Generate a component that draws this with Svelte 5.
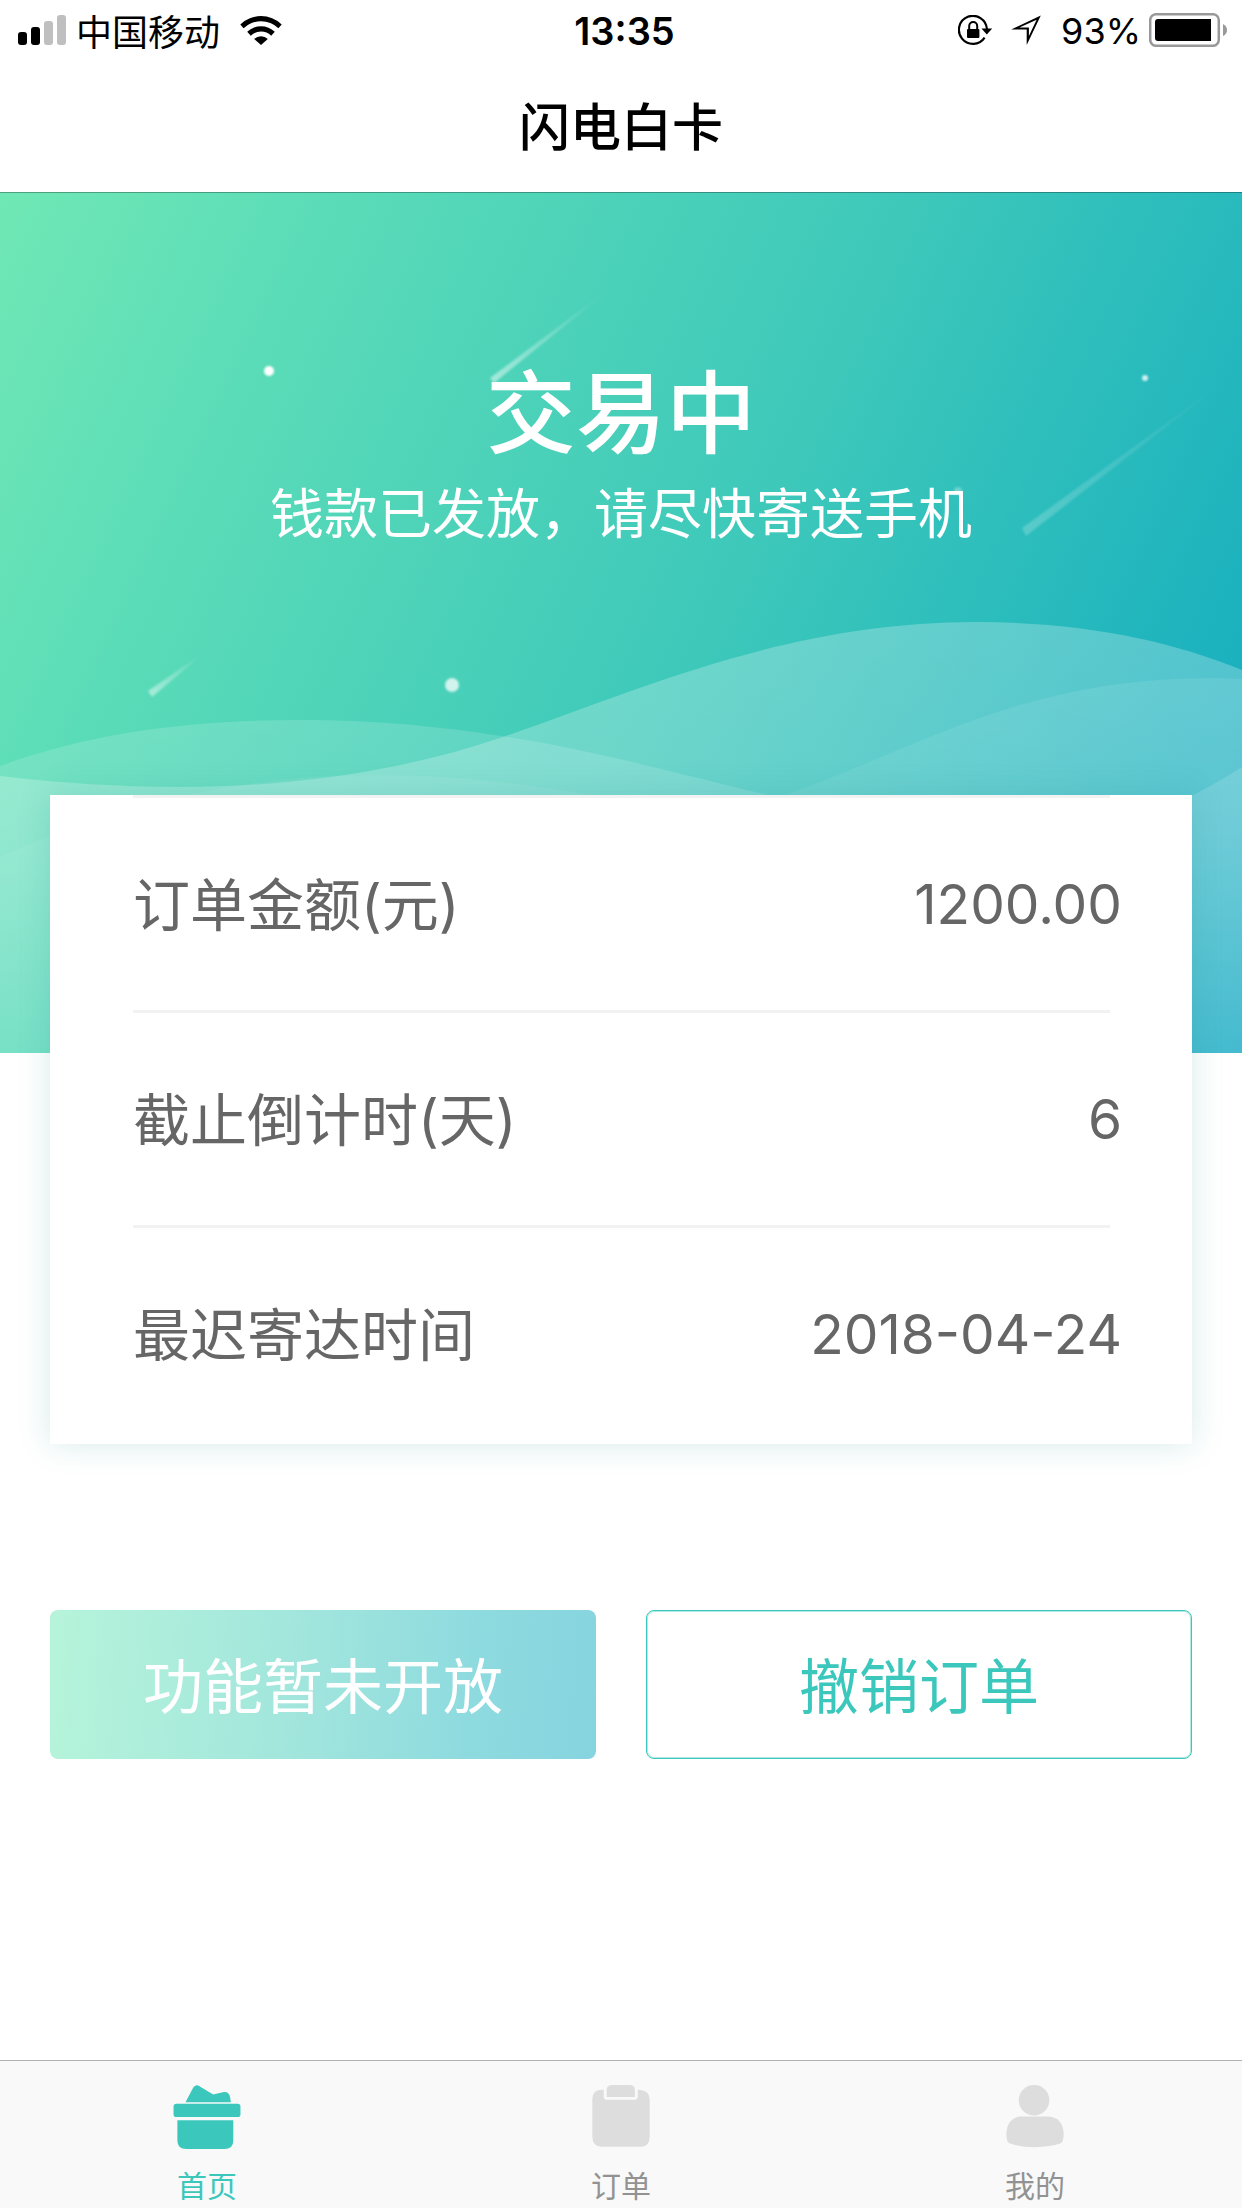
<script>
  const order = [
    { label: "订单金额(元)", value: "1200.00" },
    { label: "截止倒计时(天)", value: "6" },
    { label: "最迟寄达时间", value: "2018-04-24" },
  ];

  const tabs = [
    { id: "home", label: "首页" },
    { id: "orders", label: "订单" },
    { id: "mine", label: "我的" },
  ];

  let active = "home";
</script>

<div class="page">
  <div class="status-bar">
    <div class="status-left">
      <svg width="48" height="30" viewBox="0 0 48 30" aria-hidden="true">
        <rect x="0" y="17" width="9" height="13" rx="3" />
        <rect x="13" y="12" width="9" height="18" rx="3" />
        <rect x="26" y="6" width="9" height="24" rx="3" fill="#bfbfbf" />
        <rect x="39" y="0" width="9" height="30" rx="3" fill="#bfbfbf" />
      </svg>
      <span class="carrier">中国移动</span>
      <svg width="42" height="30" viewBox="0 0 42 30" aria-hidden="true">
        <path d="M0.3 9.4A30 30 0 0 1 41.7 9.4L38.4 13.2A25 25 0 0 0 3.6 13.2Z" />
        <path d="M7.2 16.8A20 20 0 0 1 34.8 16.8L31.2 20.7A14.6 14.6 0 0 0 10.8 20.7Z" />
        <path d="M14.2 23.9A10 10 0 0 1 27.8 23.9L21 30Z" />
      </svg>
    </div>
    <span class="time">13:35</span>
    <div class="status-right">
      <svg width="35" height="30" viewBox="0 0 35 30" aria-hidden="true">
        <path d="M26.6 22.6A14 14 0 1 1 28.9 14" fill="none" stroke="#000" stroke-width="2.2" />
        <path d="M23.5 13.5H34.2L28.8 19.5Z" />
        <rect x="9" y="14" width="12.4" height="9" rx="1" />
        <path d="M11.2 14.5V11a4 4 0 0 1 8 0v3.5" fill="none" stroke="#000" stroke-width="2" />
      </svg>
      <svg class="location" width="30" height="30" viewBox="0 0 30 30" aria-hidden="true">
        <path fill-rule="evenodd" d="M29.8 0.6 15.7 30V14.5H0.2ZM25.6 4.8 8.5 12.4H17.9V21Z" />
      </svg>
      <span class="percent">93%</span>
      <svg width="78" height="34" viewBox="0 0 78 34" aria-hidden="true">
        <rect x="1.2" y="1.2" width="68.6" height="31.6" rx="6" fill="none" stroke="#999" stroke-width="2.5" />
        <path d="M9 6H62V28H9A3 3 0 0 1 6 25V9A3 3 0 0 1 9 6Z" />
        <path d="M74 11Q78 13 78 17T74 23Z" fill="#999" />
      </svg>
    </div>
  </div>

  <header>
    <h1>闪电白卡</h1>
  </header>

  <main>
    <section class="hero">
      <svg class="scene" viewBox="0 192 1242 861" preserveAspectRatio="none" aria-hidden="true">
        <defs>
          <linearGradient id="wave" x1="0" y1="620" x2="0" y2="1053" gradientUnits="userSpaceOnUse">
            <stop offset="0" stop-color="#fff" stop-opacity="0.25" />
            <stop offset="0.5" stop-color="#fff" stop-opacity="0.23" />
            <stop offset="1" stop-color="#fff" stop-opacity="0.16" />
          </linearGradient>
          <linearGradient id="soft" x1="0" y1="720" x2="0" y2="1053" gradientUnits="userSpaceOnUse">
            <stop offset="0" stop-color="#fff" stop-opacity="0.15" />
            <stop offset="0.3" stop-color="#fff" stop-opacity="0.13" />
            <stop offset="1" stop-color="#fff" stop-opacity="0.03" />
          </linearGradient>
          <linearGradient id="faint" x1="0" y1="678" x2="0" y2="1053" gradientUnits="userSpaceOnUse">
            <stop offset="0" stop-color="#fff" stop-opacity="0.09" />
            <stop offset="1" stop-color="#fff" stop-opacity="0.01" />
          </linearGradient>
          <linearGradient id="trail" x1="1" y1="0" x2="0" y2="1">
            <stop offset="0" stop-color="#fff" stop-opacity="0" />
            <stop offset="1" stop-color="#fff" stop-opacity="0.5" />
          </linearGradient>
          <filter id="glow" x="-50%" y="-50%" width="200%" height="200%">
            <feGaussianBlur stdDeviation="1" />
          </filter>
        </defs>

        <path fill="url(#soft)" d="M0 766C90 733 190 720 300 720C500 720 650 768 768 795L1100 860V1053H0Z" />
        <path fill="url(#wave)" d="M0 776C60 783 120 787 180 787C290 787 400 772 503 737C650 686 790 622 977 622C1080 622 1170 640 1242 670V1053H0Z" />
        <path fill="url(#faint)" d="M0 857C120 805 240 775 376 775C450 775 520 783 590 795L800 860V1053H0Z" />
        <path fill="url(#faint)" d="M560 840C640 836 710 820 785 795C920 748 1020 678 1215 678L1242 679V1053H560Z" />
        <path fill="url(#soft)" d="M1120 830Q1190 800 1242 767V1053H1120Z" />

        <g filter="url(#glow)">
          <path d="M604 294 598 297 490 378 494 383Z" fill="url(#trail)" />
          <path d="M1242 368 1238 371 1022 528 1026 536Z" fill="url(#trail)" opacity="0.45" />
          <path d="M203 654 197 657 148 691 152 697Z" fill="url(#trail)" />
          <circle cx="269" cy="371" r="5" fill="#fff" />
          <circle cx="1145" cy="378" r="3" fill="#fff" opacity="0.8" />
          <circle cx="452" cy="685" r="7" fill="#fff" opacity="0.75" />
          <circle cx="958" cy="491" r="4" fill="#fff" opacity="0.3" />
        </g>
      </svg>
      <div class="hero-text">
        <h2>交易中</h2>
        <p>钱款已发放，请尽快寄送手机</p>
      </div>
    </section>

    <dl class="card">
      {#each order as row}
        <div class="row">
          <dt>{row.label}</dt>
          <dd>{row.value}</dd>
        </div>
      {/each}
    </dl>

    <div class="actions">
      <button type="button" class="primary">功能暂未开放</button>
      <button type="button" class="outline">撤销订单</button>
    </div>
  </main>

  <nav>
    {#each tabs as tab}
      <a href="#{tab.id}" class:active={active === tab.id} on:click={() => (active = tab.id)}>
        <svg width="72" height="68" viewBox="0 0 72 68" fill="currentColor" aria-hidden="true">
          {#if tab.id === "home"}
            <path d="M13.500 18 21.500 3Q24-1.500 28.500 1.500L42.500 10 52.500 7.500Q58.500 6 60 12L61 18Z" />
            <rect x="1" y="19.500" width="70" height="14" rx="3" />
            <path d="M5 37H63.500V58Q63.500 67 54 67H14.500Q5 67 5 58Z" />
          {:else if tab.id === "orders"}
            <path d="M16 5H18V12Q18 15.500 21.500 15.500H50Q53.500 15.500 53.500 12V5H55Q66 6 66 15V54Q66 64.500 57 64.500H16Q6 64.500 6 54V15Q6 5 16 5Z" />
            <path d="M21 12.500V5Q21 0 27 0H45Q50.500 0 50.500 5V12.500Z" />
          {:else}
            <ellipse cx="35" cy="16" rx="16" ry="16" />
            <path d="M21 33H50Q65 34 66 51Q66 59 63 61Q52 65 36 65T9 61Q6 59 6 51Q7 34 21 33Z" />
          {/if}
        </svg>
        <span>{tab.label}</span>
      </a>
    {/each}
  </nav>
</div>

<style>
  :global(body) {
    background: #fff;
  }

  .page {
    display: flex;
    flex-direction: column;
    min-height: 100vh;
    background: #fff;
    color: #000;
    font-family: Inter, "Noto Sans CJK SC", sans-serif;
  }

  .status-bar {
    display: grid;
    grid-template-columns: 1fr auto 1fr;
    align-items: center;
    height: 60px;
    padding: 0 15px 0 18px;
    font-size: 36px;
  }

  .status-left,
  .status-right {
    display: flex;
    align-items: center;
  }

  .status-right {
    justify-content: flex-end;
  }

  .carrier {
    margin: 0 20px 0 10px;
  }

  .time {
    padding: 2px 0 0 4px;
    font-weight: 600;
    font-size: 38px;
  }

  .location {
    margin-left: 18px;
  }

  .percent {
    margin: 2px 8px 0 20px;
  }

  header {
    box-sizing: border-box;
    display: flex;
    align-items: center;
    justify-content: center;
    height: 132px;
    padding-bottom: 4px;
  }

  h1 {
    margin: 0;
    font-size: 51px;
    font-weight: 500;
  }

  main {
    flex: 1;
  }

  .hero {
    position: relative;
    height: 861px;
    background: linear-gradient(115deg, #70e8b5 0%, #5bdcb8 20%, #3dc8ba 56%, #1cb2be 87%, #18aac4 100%);
    box-shadow: inset 0 1px 0 rgba(0, 0, 0, 0.3);
  }

  .scene {
    position: absolute;
    inset: 0;
    width: 100%;
    height: 100%;
  }

  .hero-text {
    position: relative;
    padding-top: 168px;
    color: #fff;
    text-align: center;
  }

  h2 {
    margin: 0;
    font-size: 90px;
    font-weight: 500;
    line-height: 108px;
  }

  .hero-text p {
    margin: 0;
    font-size: 54px;
    line-height: 94px;
  }

  .card {
    position: relative;
    margin: -258px 50px 0;
    padding: 0 70px 4px 83px;
    background: #fff;
    box-shadow: 0 0 30px rgba(34, 140, 140, 0.18);
    color: #666;
    font-size: 57px;
  }

  .row {
    display: flex;
    align-items: center;
    justify-content: space-between;
    height: 212px;
    border-top: 3px solid transparent;
    border-image: linear-gradient(90deg, #f2f2f2 0 calc(100% - 12px), transparent 0) 3 0 0;
  }

  dt {
    padding-bottom: 6px;
  }

  dd {
    margin: 0;
    font-size: 55px;
  }

  .actions {
    display: grid;
    grid-template-columns: 1fr 1fr;
    gap: 50px;
    margin: 166px 50px 0;
  }

  button {
    height: 149px;
    padding: 0 0 4px;
    border: 1px solid #3bc7bb;
    border-radius: 8px;
    background: #fff;
    color: #3bc7bb;
    font-family: inherit;
    font-size: 60px;
  }

  .outline {
    box-shadow: inset 0 0 0 1px rgba(59, 199, 187, 0.4);
  }

  .primary {
    border: 0;
    background: linear-gradient(95deg, #b6f4da, #9fe4dd 50%, #8ddadf 78%, #86d4df);
    color: #fff;
  }

  nav {
    display: flex;
    height: 147px;
    border-top: 1px solid #b2b2b2;
    background: #f9f9f9;
  }

  nav a {
    display: flex;
    flex: 1;
    flex-direction: column;
    align-items: center;
    padding-top: 24px;
    color: #ddd;
    text-decoration: none;
  }

  nav span {
    margin-top: 14px;
    color: #929292;
    font-size: 30px;
    line-height: 44px;
  }

  nav a.active,
  nav a.active span {
    color: #3bc7bb;
  }
</style>
